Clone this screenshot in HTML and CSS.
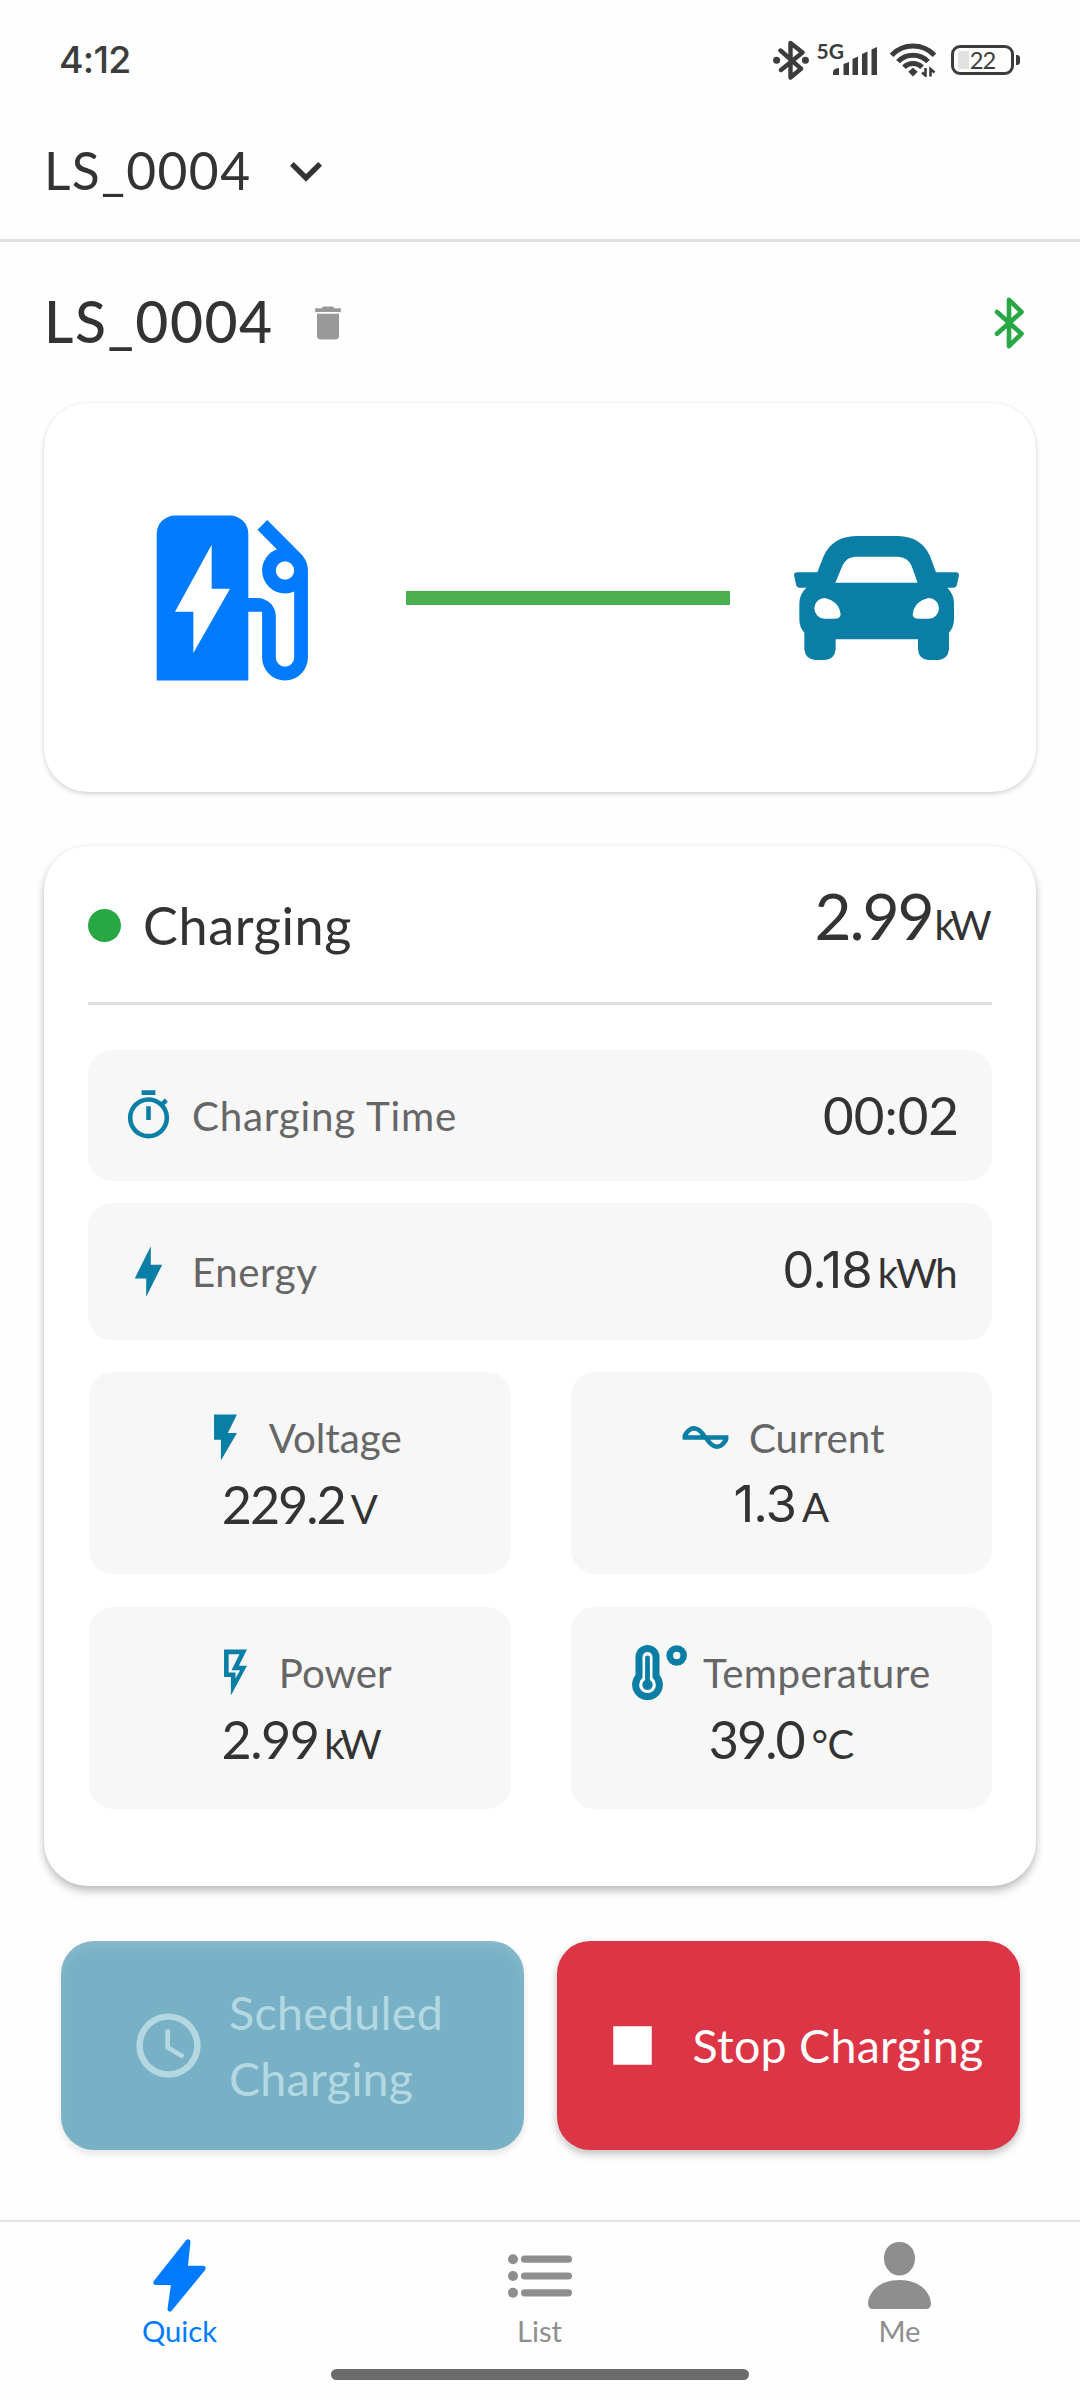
FILE: index.html
```html
<!DOCTYPE html>
<html lang="en">
<head>
<meta charset="utf-8">
<title>LS_0004</title>
<meta name="viewport" content="width=1080">
<link rel="stylesheet" href="styles.css">
</head>
<body>
<div class="screen">
  <div class="status-bar">
    <span class="clock">4:12</span>
    <div class="status-icons">
      <svg class="status-bt" width="36" height="40" viewBox="0 0 36 40"><path d="M7.5 10.5 28 28.7 17.5 37.5V3L29.5 12.5 8 30" fill="none" stroke="currentColor" stroke-width="4.4" stroke-linecap="round" stroke-linejoin="round"/><circle cx="3.6" cy="20.3" r="3.5" fill="currentColor"/><circle cx="32.4" cy="20.3" r="3.5" fill="currentColor"/></svg>
      <span class="network">5G</span>
      <svg class="signal" width="44" height="28" viewBox="0 0 44 28" fill="currentColor"><path d="M0 28v-3q0-3 5-4h1v7zM10.500 28V17l5.500-2v13zM19.500 28V12l5.500-2.500V28zM29 28V7l5.500-2.500V28zM38.500 28V2.500L44 0v28z"/></svg>
      <svg class="wifi" width="46" height="34" viewBox="0 0 46 34"><g fill="none" stroke="currentColor" stroke-width="5"><path d="M1.500 12.200Q10.500 3 23 3t21.500 9.200M8 18.600q6-6.400 15-6.400t15 6.400M14 24.300q3.500-3.800 9-3.800t9 3.800"/></g><path d="M23 24.800l4.700 3.900L23 33.500l-4.700-4.800z" fill="currentColor"/><path d="M35.500 25v7.500l-3.500-3M40.500 33.500v-7.500l4 3.500" fill="none" stroke="currentColor" stroke-width="2.600"/></svg>
      <div class="battery"><span class="battery-body"><i class="battery-fill"></i><b class="battery-text">22</b></span><i class="battery-tip"></i></div>
    </div>
  </div>

  <header class="header">
    <span class="header-name">LS_0004</span>
    <svg class="chevron" width="64" height="64" viewBox="0 0 24 24"><path fill="currentColor" d="M7.410 8.590 12 13.170l4.590-4.580L18 10l-6 6-6-6z"/></svg>
  </header>

  <div class="title-row">
    <h1 class="title">LS_0004</h1>
    <svg class="trash" width="44" height="44" viewBox="0 0 24 24"><path fill="currentColor" d="M19 4h-3.500l-1-1h-5l-1 1H5v2h14M6 19a2 2 0 0 0 2 2h8a2 2 0 0 0 2-2V7H6z"/></svg>
    <svg class="link-state" width="30" height="52" viewBox="0 0 30 52"><path d="M3 15 27.500 36.800 15 49.200V2.800L27.500 15 3 36.800" fill="none" stroke="currentColor" stroke-width="4.600" stroke-linecap="round" stroke-linejoin="round"/></svg>
  </div>

  <section class="card flow-card">
    <svg class="pump" width="220" height="220" viewBox="0 0 24 24"><path fill="currentColor" d="M19.770 7.230 19.780 7.220 16.060 3.500 15 4.560 17.110 6.670C16.170 7.030 15.500 7.930 15.500 9A2.500 2.500 0 0 0 18 11.500C18.360 11.500 18.690 11.420 19 11.290V18.500A1 1 0 0 1 18 19.500A1 1 0 0 1 17 18.500V14A2 2 0 0 0 15 12H14V5A2 2 0 0 0 12 3H6A2 2 0 0 0 4 5V21H14V13.500H15.500V18.500A2.500 2.500 0 0 0 18 21A2.500 2.500 0 0 0 20.500 18.500V9C20.500 8.310 20.220 7.680 19.770 7.230M18 10A1 1 0 0 1 17 9A1 1 0 0 1 18 8A1 1 0 0 1 19 9A1 1 0 0 1 18 10M8 18V13.500H6L10 6.200V11H12L8 18Z"/></svg>
    <div class="flow-line"></div>
    <svg class="car" width="165" height="124" viewBox="282 168 495 372"><path fill="currentColor" fill-rule="evenodd" d="M352 277 371 228Q397 170 468 168H594Q664 170 690 228L708 277H768Q777 277 777 286L771 313Q769 323 762 323H742Q762 343 762 370V418Q762 442 747 458V508Q744 537 716 540H684Q656 537 654 508V478H407V508Q404 537 376 540H345Q316 537 313 508V458Q298 442 298 418V370Q298 343 319 323H297Q290 323 288 313L282 286Q282 277 291 277ZM406 308H653L634 256Q622 231 594 230H466Q440 231 428 256ZM374 354A31 31 0 0 0 374 416H404Q420 416 422 404Q418 364 374 354ZM686 354Q642 364 638 404Q640 416 656 416H686A31 31 0 0 0 686 354Z"/></svg>
  </section>

  <section class="card detail-card">
    <div class="detail-head">
      <span class="dot"></span>
      <span class="state">Charging</span>
      <span class="power-now"><span class="power-num">2.99</span><span class="power-unit">kW</span></span>
    </div>

    <div class="row row-time">
      <svg class="icon" viewBox="0 0 24 24"><path fill="currentColor" d="M19.030 7.390 20.450 5.970C20 5.460 19.550 5 19.040 4.560L17.620 6C16.070 4.740 14.120 4 12 4A9 9 0 0 0 3 13A9 9 0 0 0 12 22C17 22 21 17.970 21 13C21 10.880 20.260 8.930 19.030 7.390M12 20A7 7 0 0 1 5 13A7 7 0 0 1 12 6A7 7 0 0 1 19 13A7 7 0 0 1 12 20M11 14H13V8H11V14M15 1H9V3H15V1Z"/></svg>
      <span class="label label-wide">Charging Time</span>
      <span class="row-value">00:02</span>
    </div>
    <div class="row row-energy">
      <svg class="icon" viewBox="0 0 24 24"><path fill="currentColor" d="M11 15H6L13 1V9H18L11 23V15Z"/></svg>
      <span class="label label-energy">Energy</span>
      <span class="row-value"><span class="num-inter">0.18</span><span class="unit unit-kwh">kWh</span></span>
    </div>

    <div class="tiles">
      <div class="tile">
        <div class="tile-label"><svg class="icon" viewBox="0 0 24 24"><path fill="currentColor" d="M7 2V13H10V22L17 10H13L17 2H7Z"/></svg><span class="label">Voltage</span></div>
        <div class="tile-value"><span class="num">229.2</span><span class="unit">V</span></div>
      </div>
      <div class="tile">
        <div class="tile-label"><svg class="icon" viewBox="0 0 24 24"><path fill="currentColor" d="M12.430 11C12.280 10.840 10 7 7 7S2.320 10.180 2 11V13H11.570C11.720 13.160 14 17 17 17S21.680 13.820 22 13V11H12.430M7 9C8.170 9 9.180 9.850 10 11H4.310C4.780 10.170 5.540 9 7 9M17 15C15.830 15 14.820 14.150 14 13H19.690C19.220 13.830 18.460 15 17 15Z"/></svg><span class="label">Current</span></div>
        <div class="tile-value"><span class="num-inter">1.3</span><span class="unit">A</span></div>
      </div>
      <div class="tile">
        <div class="tile-label"><svg class="icon" viewBox="0 0 24 24"><path fill="currentColor" d="M7 2H17L13.500 9H17L10 22V14H7V2M9 4V12H12V14.660L14 11H10.240L13.760 4H9Z"/></svg><span class="label">Power</span></div>
        <div class="tile-value"><span class="num num-power">2.99</span><span class="unit unit-kw">kW</span></div>
      </div>
      <div class="tile">
        <div class="tile-label"><svg class="icon" viewBox="0 0 55 55"><path fill="currentColor" d="M3.500 12a12 12 0 0 1 24 0V30a15.400 15.400 0 1 1-24 0z"/><path d="M15.500 12V36" stroke="#fff" stroke-width="10" stroke-linecap="round"/><circle cx="15.500" cy="39.700" r="8.400" fill="#fff"/><path d="M15.500 13V38" stroke="currentColor" stroke-width="4.800" stroke-linecap="round"/><circle cx="15.500" cy="39.700" r="5.200" fill="currentColor"/><circle cx="44.700" cy="10.500" r="7" fill="none" stroke="currentColor" stroke-width="6.600"/></svg><span class="label label-temp">Temperature</span></div>
        <div class="tile-value"><span class="num">39.0</span><span class="unit unit-c">°C</span></div>
      </div>
    </div>
  </section>

  <div class="actions">
    <button class="btn btn-schedule" disabled>
      <svg class="btn-icon" viewBox="0 0 24 24"><path fill="currentColor" d="M11.990 2C6.470 2 2 6.480 2 12s4.470 10 9.990 10C17.520 22 22 17.520 22 12S17.520 2 11.990 2zM12 20c-4.420 0-8-3.580-8-8s3.580-8 8-8 8 3.580 8 8-3.580 8-8 8zM12.500 7H11v6l5.250 3.150.75-1.230-4.500-2.670z"/></svg>
      <span class="btn-text">Scheduled<br>Charging</span>
    </button>
    <button class="btn btn-stop">
      <svg class="btn-icon" viewBox="0 0 24 24"><path fill="currentColor" d="M6 6h12v12H6z"/></svg>
      <span class="btn-text">Stop Charging</span>
    </button>
  </div>

  <nav class="tabs">
    <a class="tab tab-active">
      <svg width="53" height="73" viewBox="0 0 53 73"><path d="M35 2.800 32.200 29.300H50.200L17 70 20.800 43.500H2.800Z" fill="currentColor" stroke="currentColor" stroke-width="5" stroke-linejoin="round"/></svg>
      <span class="tab-label">Quick</span>
    </a>
    <a class="tab">
      <svg width="64" height="73" viewBox="0 0 64 73" fill="currentColor"><circle cx="5" cy="20.200" r="5"/><circle cx="5" cy="37" r="5"/><circle cx="5" cy="53.800" r="5"/><rect x="13" y="16.600" width="51" height="7.200" rx="3.600"/><rect x="13" y="33.400" width="51" height="7.200" rx="3.600"/><rect x="13" y="50.200" width="51" height="7.200" rx="3.600"/></svg>
      <span class="tab-label">List</span>
    </a>
    <a class="tab">
      <svg width="63" height="73" viewBox="0 0 63 73" fill="currentColor"><path d="M31.500 3C41 3 47 10 47 19.500S40 36.500 31.500 36.500 16 29 16 19.500 22 3 31.500 3ZM0 64C1.500 51 13 41 31.500 41S61.500 51 63 64Q63 70 58 70H5Q0 70 0 64Z"/></svg>
      <span class="tab-label">Me</span>
    </a>
  </nav>
  <div class="home-bar"></div>
</div>
</body>
</html>
```
FILE: styles.css
```css
* { box-sizing: border-box; }

body {
  margin: 0;
  background: #fefefe;
  color: #333;
  font-family: Lato, "Open Sans", sans-serif;
}

svg { display: block; flex: none; }

.screen {
  display: flex;
  flex-direction: column;
  width: 1080px;
  height: 2400px;
  overflow: hidden;
}

/* Status bar */
.status-bar {
  display: flex;
  justify-content: space-between;
  align-items: center;
  height: 104px;
  padding: 16px 60px 0 59px;
  color: #3c3c3c;
}
.clock { font: 500 37.400px/46px Inter, sans-serif; letter-spacing: -.7px; }
.status-icons { display: flex; align-items: center; }
.network {
  margin: 0 0 19px 8px;
  font: 700 21px/24px Lato, sans-serif;
}
.signal { margin: 2px 0 0 -11px; }
.wifi { margin-left: 13px; }
.battery { display: flex; align-items: center; margin-left: 15px; }
.battery-body {
  position: relative;
  display: flex;
  justify-content: center;
  align-items: center;
  width: 63px;
  height: 30px;
  border: 3px solid currentColor;
  border-radius: 9px;
}
.battery-fill {
  position: absolute;
  left: 4px;
  top: 3px;
  width: 11px;
  height: 18px;
  border-radius: 3px 0 0 3px;
  background: #e2e2e2;
}
.battery-text {
  position: relative;
  font: 400 23.700px/24px Lato, sans-serif;
  letter-spacing: -1.100px;
}
.battery-tip {
  width: 4px;
  height: 10px;
  margin-left: 2px;
  border-radius: 0 3px 3px 0;
  background: currentColor;
}

/* Device picker */
.header {
  display: flex;
  align-items: center;
  height: 138px;
  padding-left: 44px;
  border-bottom: 3px solid #e0e0e0;
}
.header-name {
  padding-bottom: 3px;
  font-size: 51.500px;
  line-height: 62px;
  letter-spacing: 1.420px;
}
.chevron { margin: 0 0 2px 23px; }

.title-row {
  display: flex;
  align-items: center;
  height: 161px;
  padding: 0 56px 0 44px;
}
.title {
  margin: 0;
  padding-bottom: 3px;
  font-size: 57px;
  font-weight: 500;
  line-height: 68px;
  letter-spacing: 1.550px;
}
.trash { margin-left: 32px; color: #999; }
.link-state { margin-left: auto; color: #28a745; }

/* Cards */
.card {
  margin: 0 44px;
  border-radius: 44px;
  background: #fff;
}
.flow-card {
  display: flex;
  align-items: center;
  height: 389px;
  padding: 0 77px 0 76px;
  box-shadow: 0 2px 5px rgba(0, 0, 0, .17), 0 0 2px rgba(0, 0, 0, .06);
}
.pump { color: #007aff; }
.flow-line {
  flex: 1;
  height: 14px;
  margin: 0 64px 0 66px;
  background: #4caf50;
}
.car { color: #0a7ea4; }

.detail-card {
  height: 1040px;
  margin-top: 54px;
  padding: 0 44px;
  box-shadow: 0 5px 8px rgba(0, 0, 0, .25), 0 0 3px rgba(0, 0, 0, .06);
}
.detail-head {
  display: flex;
  align-items: center;
  height: 159px;
  padding-top: 3px;
  border-bottom: 3px solid #e0e0e0;
}
.dot {
  width: 33px;
  height: 33px;
  border-radius: 50%;
  background: #28a745;
}
.state {
  margin-left: 22px;
  padding-bottom: 1px;
  font-size: 52.200px;
  line-height: 62px;
  letter-spacing: .6px;
}
.power-now {
  margin-left: auto;
  padding-bottom: 2px;
  line-height: 76px;
}
.power-num { font-size: 64px; letter-spacing: -2.100px; }
.power-unit { margin: 0 4px 0 2px; font-size: 40px; letter-spacing: -3.700px; }

.row {
  display: flex;
  align-items: center;
  padding: 0 33px;
  border-radius: 24px;
  background: #f7f7f7;
}
.row-time { height: 131px; margin-top: 45px; }
.row-energy { height: 137px; margin-top: 22px; }
.icon { width: 55px; height: 55px; margin-right: 16px; color: #0a7ea4; }
.label { color: #666; font-size: 40.300px; line-height: 50px; }
.label-wide { letter-spacing: .8px; }
.label-energy { letter-spacing: .5px; }
.label-temp { letter-spacing: .4px; }
.row-value {
  margin-left: auto;
  padding-bottom: 2px;
  font-size: 52.900px;
  line-height: 62px;
}
.num { font-size: 52px; letter-spacing: -2px; }
.num-power { letter-spacing: -1.500px; }
.num-inter { font-family: Inter, sans-serif; font-size: 51px; letter-spacing: -1px; }
.unit { margin-left: 6px; font-size: 40px; }
.unit-kwh { margin-right: 3px; letter-spacing: -1.600px; }
.unit-kw { letter-spacing: -3.700px; }
.unit-c { margin-left: 8px; letter-spacing: -.6px; }

.tiles {
  display: grid;
  grid-template-columns: 1fr 1fr;
  gap: 33px 60px;
  margin: 32px 0 0 1px;
}
.tile {
  height: 202px;
  padding-top: 33px;
  border-radius: 24px;
  background: #f7f7f7;
}
.tile-label, .tile-value {
  display: flex;
  justify-content: center;
  align-items: center;
  height: 66px;
}
.tile-label .icon { margin-bottom: 2px; }
.tile-value { align-items: baseline; line-height: 66px; }

/* Actions */
.actions {
  display: flex;
  gap: 33px;
  margin: 55px 60px 0 61px;
}
.btn {
  display: flex;
  flex: none;
  align-items: center;
  justify-content: center;
  width: 463px;
  height: 209px;
  padding: 0;
  border: 0;
  border-radius: 33px;
  color: #fff;
  font: 400 46.600px/66px Lato, sans-serif;
  letter-spacing: .25px;
  text-align: left;
  white-space: nowrap;
}
.btn-icon { width: 77px; height: 77px; margin-right: 22px; }
.btn-text { padding-bottom: 2px; }
.btn-schedule {
  justify-content: flex-start;
  padding-left: 69px;
  background: #78b1c5;
  color: #b3d8e2;
  box-shadow: inset 0 7px 8px rgba(255, 255, 255, .1), 0 4px 7px rgba(0, 0, 0, .1);
}
.btn-stop {
  background: #dc3545;
  box-shadow: 0 4px 8px rgba(0, 0, 0, .25);
}

/* Tabs */
.tabs {
  display: grid;
  grid-template-columns: repeat(3, 1fr);
  height: 149px;
  margin-top: 70px;
  border-top: 2px solid #e4e4e4;
}
.tab {
  display: flex;
  flex-direction: column;
  align-items: center;
  padding: 17px 1px 0 0;
  color: #8e8e8f;
}
.tab-active { color: #007aff; }
.tab-label {
  margin-top: 1px;
  font-size: 29.200px;
  line-height: 36px;
}
.home-bar {
  width: 418px;
  height: 11px;
  margin: 0 auto;
  border-radius: 6px;
  background: #6b6b6b;
}
```
